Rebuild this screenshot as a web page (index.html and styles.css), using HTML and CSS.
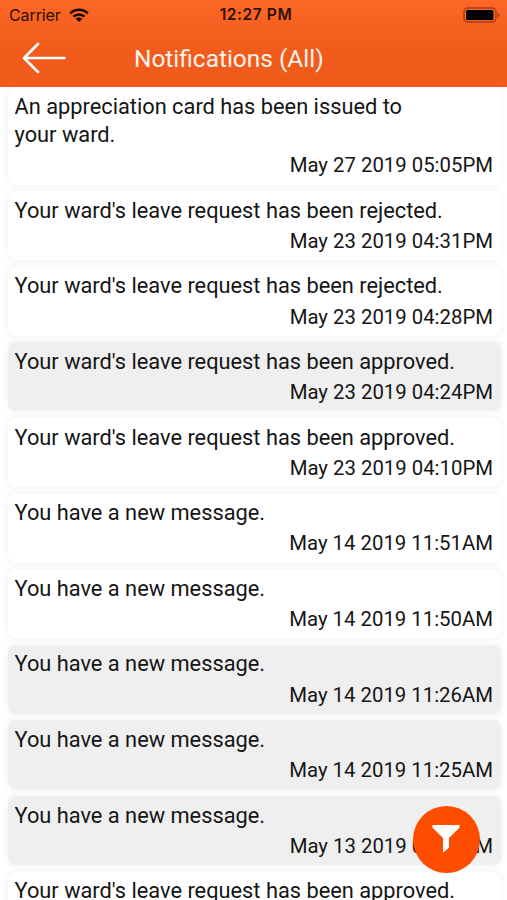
FILE: index.html
```html
<!DOCTYPE html>
<html lang="en">
<head>
<meta charset="utf-8">
<title>Notifications</title>
<link rel="stylesheet" href="styles.css">
</head>
<body>
<main class="screen">
  <header class="header">
    <div class="status">
      <div class="carrier"><span>Carrier</span>
        <svg class="wifi" width="20" height="14" viewBox="0 0 20 14"><g fill="none" stroke="currentColor" stroke-width="2.5"><path d="M1.2 5.3a12.5 12.5 0 0 1 17.6 0"/><path d="M4.4 8.7a8 8 0 0 1 11.2 0"/></g><path d="M6.7 10.8a4.8 4.8 0 0 1 6.6 0L10 14z" fill="currentColor"/></svg>
      </div>
      <span class="clock">12:27 PM</span>
      <svg class="battery" width="37" height="16" viewBox="0 0 37 16"><rect x="1" y="1" width="32" height="14" rx="4" fill="none" stroke="#a63e12" stroke-width="1.4"/><rect x="3" y="3" width="27.500" height="10" rx="1.500" fill="#000"/><path d="M34.500 5.500q2 1 2 2.500t-2 2.500z" fill="#a63e12"/></svg>
    </div>
    <div class="nav">
      <svg class="back" width="46" height="32" viewBox="0 0 46 32" fill="none" stroke="#fff" stroke-width="2.700" stroke-linecap="round" stroke-linejoin="round"><path d="M17 2 3 16 17 30M3 16h40.500"/></svg>
      <h1 class="title">Notifications (All)</h1>
    </div>
  </header>
  <section class="list">
    <article class="card first"><p class="message">An appreciation card has been issued to<br>your ward.</p><time class="date">May 27 2019 05:05PM</time></article>
    <article class="card"><p class="message">Your ward's leave request has been rejected.</p><time class="date">May 23 2019 04:31PM</time></article>
    <article class="card"><p class="message">Your ward's leave request has been rejected.</p><time class="date">May 23 2019 04:28PM</time></article>
    <article class="card read"><p class="message">Your ward's leave request has been approved.</p><time class="date">May 23 2019 04:24PM</time></article>
    <article class="card"><p class="message">Your ward's leave request has been approved.</p><time class="date">May 23 2019 04:10PM</time></article>
    <article class="card"><p class="message">You have a new message.</p><time class="date">May 14 2019 11:51AM</time></article>
    <article class="card"><p class="message">You have a new message.</p><time class="date">May 14 2019 11:50AM</time></article>
    <article class="card read"><p class="message">You have a new message.</p><time class="date">May 14 2019 11:26AM</time></article>
    <article class="card read"><p class="message">You have a new message.</p><time class="date">May 14 2019 11:25AM</time></article>
    <article class="card read"><p class="message">You have a new message.</p><time class="date">May 13 2019 04:20PM</time></article>
    <article class="card"><p class="message">Your ward's leave request has been approved.</p></article>
  </section>
  <button class="filter" aria-label="Filter"><svg width="28" height="28" viewBox="0 0 28 28"><path d="M1.200 0h25.600q1.200 0 .8 1.200v1.200L17 13v9.500L12 27q-1 .8-1-1V13L.4 2.400V1.200Q0 0 1.200 0z" fill="#fff"/></svg></button>
</main>
</body>
</html>
```
FILE: styles.css
```css
* { box-sizing: border-box; }
body { margin: 0; background: #fff; font-family: Roboto, sans-serif; color: #151515; }
.screen { position: relative; width: 507px; height: 900px; overflow: hidden; }
.header { position: relative; z-index: 1; height: 87px; background: linear-gradient(#fc6726, #f15c1d 55%, #f05b1c); }
.status { display: grid; grid-template-columns: 1fr auto 1fr; align-items: center; height: 30px; padding: 0 7px 0 9px; color: #2c1005; }
.carrier { display: flex; align-items: center; gap: 8px; font: 16px/20px Inter, sans-serif; letter-spacing: -0.1px; }
.wifi { color: #1b0a03; }
.clock { font: 600 15.5px/20px Inter, sans-serif; letter-spacing: 0.6px; padding: 0 0 0 3px; }
.battery { justify-self: end; }
.nav { display: flex; align-items: center; height: 57px; padding-left: 21px; }
.back { margin-top: -2px; }
.title { margin: 0 0 0 67px; font-size: 24.450px; line-height: 30px; font-weight: 400; color: #fff4ed; white-space: nowrap; }
.list { display: flex; flex-direction: column; gap: 6.600px; padding: 0.300px 6.500px 0 7.500px; }
.card { display: flex; flex-direction: column; flex: none; height: 69px; padding: 5.500px 7.500px 0 7px; border-radius: 8px; background: #fff; box-shadow: 0 0 5px 2px #f5f5f5; }
.first { height: 97.400px; }
.read { background: #efefef; }
.message { margin: 0; font-size: 21.800px; line-height: 28.300px; white-space: nowrap; }
.date { align-self: flex-end; margin-top: 2px; font-size: 20.350px; line-height: 28px; white-space: nowrap; }
.filter { position: absolute; z-index: 2; left: 412.500px; top: 805.500px; display: flex; align-items: center; justify-content: center; width: 67px; height: 67px; padding: 0; border: 0; border-radius: 50%; background: #ff4d00; }
```
